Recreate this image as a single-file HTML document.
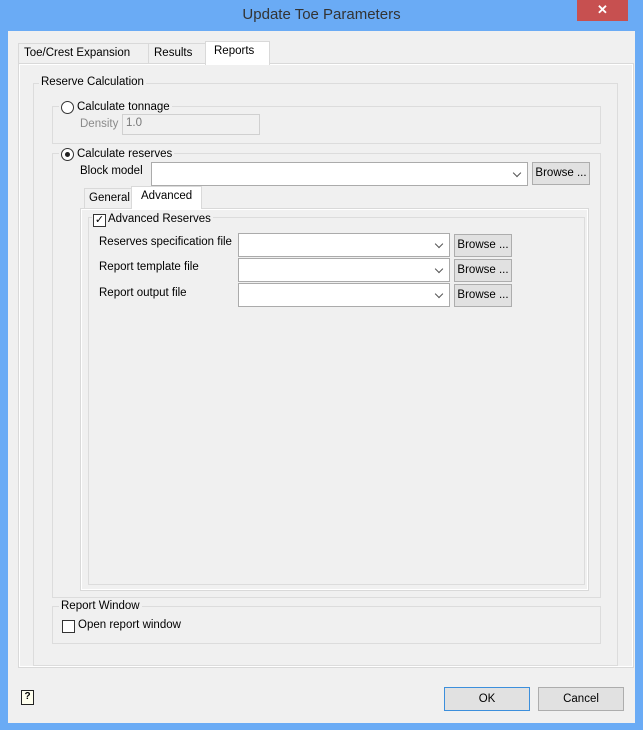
<!DOCTYPE html>
<html><head><style>
*{box-sizing:border-box;margin:0;padding:0}
body{width:643px;height:730px;background:#6aabf5;font-family:"Liberation Sans",sans-serif;font-size:11.5px;color:#000;position:relative;overflow:hidden}
.a{position:absolute}
.client{left:8px;top:31px;width:627px;height:692px;background:#f0f0f0}
.title{left:0;top:6px;width:643px;text-align:center;font-size:15px;color:#333}
.close{left:577px;top:0;width:51px;height:21px;background:#c75050;color:#fff;text-align:center;font-size:13px;line-height:20px;font-weight:bold}
.tab{border:1px solid #d9d9d9;border-bottom:none;background:#f0f0f0;padding:3px 5px;white-space:nowrap}
.tab.sel{background:#fff}
.panel{border:1px solid #d9d9d9;background:#f0f0f0;box-shadow:inset 0 0 0 1px #fff}
.grp{border:1px solid #dcdcdc}
.lbl{background:#f0f0f0;padding:0 2px}
.combo{background:#fff;border:1px solid #ababab}
.combo::after{content:"";position:absolute;right:7px;top:7px;width:5px;height:5px;border-right:1.5px solid #555;border-bottom:1.5px solid #555;transform:rotate(45deg)}
.btn{background:#e1e1e1;border:1px solid #adadad;text-align:center;line-height:20px}
.radio{width:13px;height:13px;border:1px solid #333;border-radius:50%;background:#fff}
.cb{width:13px;height:13px;border:1px solid #333;background:#fff}
</style></head><body>
<div class="a title">Update Toe Parameters</div>
<div class="a close">✕</div>
<div class="a client"></div>

<div class="a tab" style="left:18px;top:43px;width:131px;height:21px">Toe/Crest Expansion</div>
<div class="a tab" style="left:148px;top:43px;width:58px;height:21px">Results</div>
<div class="a panel" style="left:18px;top:63px;width:616px;height:605px"></div>
<div class="a tab sel" style="left:205px;top:41px;width:65px;height:24px;padding-top:3px;padding-left:8px">Reports</div>

<div class="a grp" style="left:33px;top:83px;width:585px;height:583px"></div>
<div class="a lbl" style="left:39px;top:76px">Reserve Calculation</div>

<div class="a grp" style="left:52px;top:106px;width:549px;height:38px"></div>
<div class="a lbl" style="left:59px;top:101px;padding-left:18px">Calculate tonnage</div>
<div class="a radio" style="left:61px;top:101px"></div>
<div class="a" style="left:80px;top:118px;color:#8a8a8a">Density</div>
<div class="a" style="left:122px;top:114px;width:138px;height:21px;border:1px solid #d0d0d0;background:#f0f0f0;color:#777;padding:2px 3px">1.0</div>

<div class="a grp" style="left:52px;top:153px;width:549px;height:445px"></div>
<div class="a lbl" style="left:59px;top:148px;padding-left:18px">Calculate reserves</div>
<div class="a radio" style="left:61px;top:148px"><div class="a" style="left:3px;top:3px;width:5px;height:5px;border-radius:50%;background:#222"></div></div>
<div class="a" style="left:80px;top:165px">Block model</div>
<div class="a combo" style="left:151px;top:162px;width:377px;height:24px"></div>
<div class="a btn" style="left:532px;top:162px;width:58px;height:23px">Browse ...</div>

<div class="a tab" style="left:84px;top:188px;width:48px;height:21px;padding-left:4px">General</div>
<div class="a panel" style="left:80px;top:208px;width:509px;height:383px"></div>
<div class="a tab sel" style="left:131px;top:186px;width:71px;height:23px;padding-top:3px;padding-left:9px">Advanced</div>

<div class="a grp" style="left:88px;top:217px;width:497px;height:368px"></div>
<div class="a lbl" style="left:92px;top:213px;padding-left:16px">Advanced Reserves</div>
<div class="a cb" style="left:93px;top:214px;font-size:11px;line-height:11px;text-align:center">✓</div>

<div class="a" style="left:99px;top:236px">Reserves specification file</div>
<div class="a combo" style="left:238px;top:233px;width:212px;height:24px"></div>
<div class="a btn" style="left:454px;top:234px;width:58px;height:23px">Browse ...</div>
<div class="a" style="left:99px;top:261px">Report template file</div>
<div class="a combo" style="left:238px;top:258px;width:212px;height:24px"></div>
<div class="a btn" style="left:454px;top:259px;width:58px;height:23px">Browse ...</div>
<div class="a" style="left:99px;top:287px">Report output file</div>
<div class="a combo" style="left:238px;top:283px;width:212px;height:24px"></div>
<div class="a btn" style="left:454px;top:284px;width:58px;height:23px">Browse ...</div>

<div class="a grp" style="left:52px;top:606px;width:549px;height:38px"></div>
<div class="a lbl" style="left:59px;top:600px">Report Window</div>
<div class="a cb" style="left:62px;top:620px"></div>
<div class="a" style="left:78px;top:619px">Open report window</div>

<div class="a" style="left:21px;top:690px;width:13px;height:15px;border:1.5px solid #222;background:#ffe;font-size:10px;font-weight:bold;text-align:center;line-height:12px">?</div>
<div class="a btn" style="left:444px;top:687px;width:86px;height:24px;border-color:#3c8fdc;line-height:22px">OK</div>
<div class="a btn" style="left:538px;top:687px;width:86px;height:24px;line-height:22px">Cancel</div>
</body></html>
